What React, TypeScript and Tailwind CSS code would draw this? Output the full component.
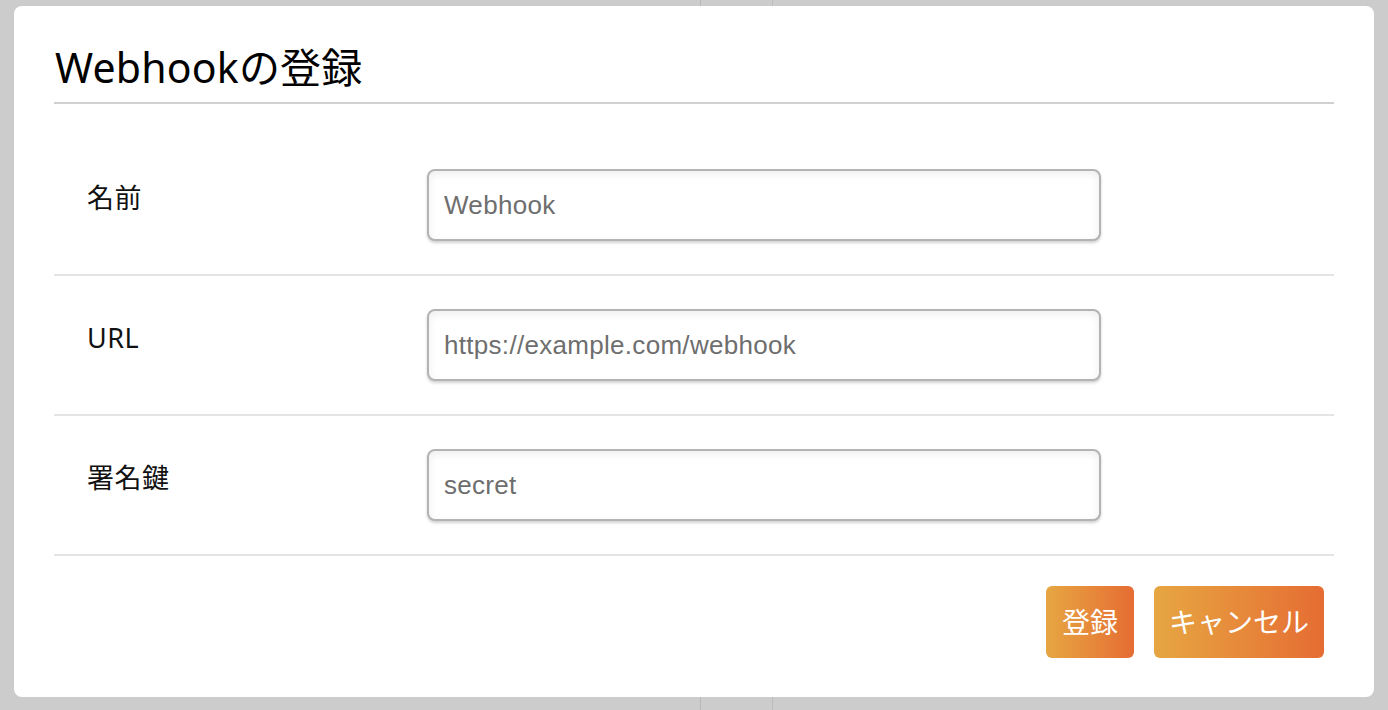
import React from 'react';

const fields = [
  { label: '名前', placeholder: 'Webhook' },
  { label: 'URL', placeholder: 'https://example.com/webhook' },
  { label: '署名鍵', placeholder: 'secret' },
];

const jp = { fontFamily: '"Noto Sans", "Noto Sans CJK JP", sans-serif' };
const latin = { fontFamily: '"Liberation Sans", Arial, sans-serif' };

export default function App() {
  return (
    <div
      className="h-[710px] w-[1388px] overflow-hidden bg-[#cccccc] bg-[linear-gradient(to_right,transparent_700px,#b8b8b8_700px,#b8b8b8_701px,transparent_701px,transparent_772px,#bcbcbc_772px,#bcbcbc_773px,transparent_773px)] pl-[14px] pt-[6px]"
      style={jp}
    >
      <div className="flex h-[691px] w-[1360px] flex-col rounded-[8px] bg-white px-[40px]">
        {/* header */}
        <div className="border-b-2 border-[#d0d0d0] pb-[5px] pt-[31px]">
          <h1 className="pl-px text-[41px] font-normal leading-[60px] tracking-[0.2px] text-black">Webhookの登録</h1>
        </div>

        {/* body */}
        <div className="pt-[32px]">
          {fields.map((f) => (
            <div key={f.label} className="flex items-start border-b-2 border-[#e4e4e4] px-[33px] py-[33px]">
              <div className="w-[340px] pt-[13px] text-[27px] leading-[32px] tracking-[0.5px] text-[#111]">{f.label}</div>
              <input
                readOnly
                placeholder={f.placeholder}
                className="h-[72px] w-[674px] rounded-[8px] border-2 border-[#b3b3b3] bg-white px-[15px] text-[26px] tracking-[0.3px] text-[#333] shadow-[inset_0_3px_8px_rgba(0,0,0,0.07),0_2px_3px_rgba(0,0,0,0.18)] outline-none placeholder:text-[#6e6e6e]"
                style={latin}
              />
            </div>
          ))}
        </div>

        {/* footer */}
        <div className="flex justify-end gap-[20px] pr-[10px] pt-[30px]">
          <button className="h-[72px] rounded-[6px] bg-linear-to-r from-[#e6a642] to-[#e56c33] px-[16px] text-[28px] text-white">
            登録
          </button>
          <button className="h-[72px] rounded-[6px] bg-linear-to-r from-[#e6a642] to-[#e56c33] px-[15px] text-[28px] text-white">
            キャンセル
          </button>
        </div>
      </div>
    </div>
  );
}
